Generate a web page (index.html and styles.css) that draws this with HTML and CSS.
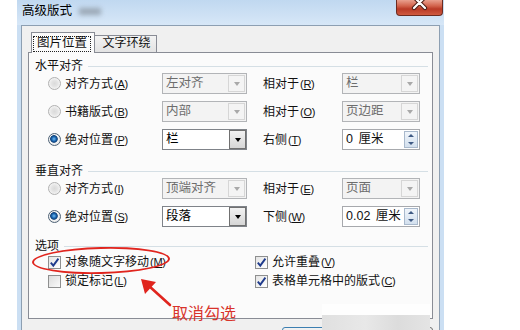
FILE: index.html
```html
<!DOCTYPE html>
<html lang="zh-CN">
<head>
<meta charset="utf-8">
<title>高级版式</title>
<link rel="stylesheet" href="styles.css">
</head>
<body>
<div class="window">
  <div class="titlebar">
    <span class="title">高级版式</span>
    <span class="title-blur"></span>
    <div class="close">
      <svg width="47" height="16" viewBox="0 0 47 16">
        <path d="M18 -2 L29 9 M29 -2 L18 9" stroke="#4a1c14" stroke-width="4.2" stroke-linecap="round" fill="none"/>
        <path d="M18 -2 L29 9 M29 -2 L18 9" stroke="#ffffff" stroke-width="2.2" stroke-linecap="round" fill="none"/>
      </svg>
    </div>
  </div>
  <div class="client">
    <div class="tabs">
      <div class="tab active"><span class="focus">图片位置</span></div>
      <div class="tab">文字环绕</div>
    </div>
    <div class="panel">
      <div class="group-head"><span>水平对齐</span><i class="rule"></i></div>
      <div class="opt-row">
        <label class="radio-label"><span class="radio"></span>对齐方式<span class="key">(<u>A</u>)</span></label>
        <div class="combo disabled"><span class="combo-text">左对齐</span><span class="combo-btn"><i class="tri"></i></span></div>
        <span class="rel-label">相对于<span class="key">(<u>R</u>)</span></span>
        <div class="combo disabled"><span class="combo-text">栏</span><span class="combo-btn"><i class="tri"></i></span></div>
      </div>
      <div class="opt-row">
        <label class="radio-label"><span class="radio"></span>书籍版式<span class="key">(<u>B</u>)</span></label>
        <div class="combo disabled"><span class="combo-text">内部</span><span class="combo-btn"><i class="tri"></i></span></div>
        <span class="rel-label">相对于<span class="key">(<u>O</u>)</span></span>
        <div class="combo disabled"><span class="combo-text">页边距</span><span class="combo-btn"><i class="tri"></i></span></div>
      </div>
      <div class="opt-row">
        <label class="radio-label"><span class="radio checked"></span>绝对位置<span class="key">(<u>P</u>)</span></label>
        <div class="combo"><span class="combo-text">栏</span><span class="combo-btn"><i class="tri"></i></span></div>
        <span class="rel-label">右侧<span class="key">(<u>T</u>)</span></span>
        <div class="spin"><span class="spin-text">0 厘米</span><span class="spin-btns"><i class="up"></i><i class="down"></i></span></div>
      </div>

      <div class="group-head v"><span>垂直对齐</span><i class="rule"></i></div>
      <div class="opt-row">
        <label class="radio-label"><span class="radio"></span>对齐方式<span class="key">(<u>I</u>)</span></label>
        <div class="combo disabled"><span class="combo-text">顶端对齐</span><span class="combo-btn"><i class="tri"></i></span></div>
        <span class="rel-label">相对于<span class="key">(<u>E</u>)</span></span>
        <div class="combo disabled"><span class="combo-text">页面</span><span class="combo-btn"><i class="tri"></i></span></div>
      </div>
      <div class="opt-row">
        <label class="radio-label"><span class="radio checked"></span>绝对位置<span class="key">(<u>S</u>)</span></label>
        <div class="combo"><span class="combo-text">段落</span><span class="combo-btn"><i class="tri"></i></span></div>
        <span class="rel-label">下侧<span class="key">(<u>W</u>)</span></span>
        <div class="spin"><span class="spin-text">0.02 厘米</span><span class="spin-btns"><i class="up"></i><i class="down"></i></span></div>
      </div>

      <div class="group-head o"><span>选项</span><i class="rule"></i></div>
      <div class="check-row">
        <label class="check-item"><span class="check on"><svg width="11" height="11" viewBox="0 0 11 11"><path d="M1.8 5.6 L4.3 8.6 L9.4 1.6" stroke="#1f3b8c" stroke-width="1.9" fill="none"/></svg></span>对象随文字移动<span class="key">(<u>M</u>)</span></label>
        <label class="check-item"><span class="check on"><svg width="11" height="11" viewBox="0 0 11 11"><path d="M1.8 5.6 L4.3 8.6 L9.4 1.6" stroke="#1f3b8c" stroke-width="1.9" fill="none"/></svg></span>允许重叠<span class="key">(<u>V</u>)</span></label>
      </div>
      <div class="check-row second">
        <label class="check-item"><span class="check"></span>锁定标记<span class="key">(<u>L</u>)</span></label>
        <label class="check-item"><span class="check on"><svg width="11" height="11" viewBox="0 0 11 11"><path d="M1.8 5.6 L4.3 8.6 L9.4 1.6" stroke="#1f3b8c" stroke-width="1.9" fill="none"/></svg></span>表格单元格中的版式<span class="key">(<u>C</u>)</span></label>
      </div>
    </div>
    <div class="buttons">
      <div class="btn default"></div>
      <div class="btn"></div>
    </div>
  </div>
</div>

<div class="watermark"><div class="wm-top"></div><div class="wm-bottom"></div></div>
<div class="ellipse"></div>
<svg class="arrow" width="40" height="36" viewBox="0 0 40 36">
  <path d="M35 32 L14 13" stroke="#e0251e" stroke-width="2.6" fill="none" stroke-linecap="round"/>
  <polygon points="6,6 21,9 10,21" fill="#e0251e"/>
</svg>
<div class="note">取消勾选</div>
</body>
</html>
```
FILE: styles.css
```css
html, body {
  margin: 0;
  padding: 0;
  height: 330px;
  overflow: hidden;
  background: #ffffff;
}

body {
  font-family: "Liberation Sans", "Noto Sans CJK SC", sans-serif;
  font-size: 12px;
  color: #111;
  position: relative;
}

u { text-decoration: underline; text-underline-offset: 1px; }

.key {
  font-family: "Liberation Sans", sans-serif;
  font-size: 11px;
  margin-left: 1px;
  letter-spacing: -0.3px;
}

.window {
  margin-left: 17px;
  width: 427px;
  height: 345px;
  background: #cbdff3;
  display: flex;
  flex-direction: column;
}

.titlebar {
  height: 25px;
  flex: none;
  display: flex;
  align-items: flex-start;
  background: linear-gradient(#c0d8f0, #d7e7f7);
}

.title {
  padding: 4px 0 0 5px;
  font-size: 12.5px;
  line-height: 15px;
  color: #000;
}

.title-blur {
  width: 22px;
  height: 7px;
  margin: 8px 0 0 7px;
  background: #8f9aa6;
  filter: blur(2.5px);
  opacity: 0.8;
}

.close {
  margin-left: auto;
  margin-right: 1px;
  width: 47px;
  height: 16px;
  box-sizing: border-box;
  border: 1px solid #6c2b20;
  border-top: none;
  border-radius: 0 0 4px 4px;
  background: linear-gradient(#e9a08e 0%, #d2624b 40%, #b93a26 60%, #cf5a40 100%);
  overflow: hidden;
}

.close svg { display: block; margin: -1px 0 0 -1px; }

.client {
  flex: 1;
  margin: 0 4px;
  border: 1px solid #8d9fb2;
  background: #f0f0f0;
  padding: 6px 6px 0 6px;
}

.tabs {
  height: 20px;
  display: flex;
  align-items: flex-end;
  padding-left: 3px;
}

.tab {
  box-sizing: border-box;
  border: 1px solid #898c95;
  border-bottom: none;
  height: 17px;
  width: 62px;
  border-left: none;
  background: linear-gradient(#f3f3f3, #e3e3e3);
  text-align: center;
  line-height: 15px;
  font-size: 12px;
  padding-left: 2px;
}

.tab.active {
  width: 64px;
  height: 21px;
  margin-bottom: -1px;
  border-left: 1px solid #898c95;
  background: #fbfbfb;
  position: relative;
  z-index: 1;
  text-align: left;
  padding: 3px 0 0 1px;
}

.focus {
  display: inline-block;
  border: 1px dotted #222;
  padding: 0 3px 0 3px;
  height: 14px;
  line-height: 13px;
  font-size: 12.5px;
}

.panel {
  box-sizing: border-box;
  height: 267px;
  border: 1px solid #898c95;
  background: #fbfbfb;
  padding: 6px 4px 0 6px;
}

.group-head {
  display: flex;
  align-items: center;
  gap: 5px;
  height: 14px;
  line-height: 14px;
}

.group-head .rule {
  flex: 1;
  height: 1px;
  background: #d5dfe5;
}

.group-head.v { margin-top: 14px; }
.group-head.o { margin-top: 12px; }

.opt-row {
  display: grid;
  grid-template-columns: 114px 85px 95px 78px;
  height: 21px;
  align-items: center;
  padding-left: 13px;
}

.opt-row + .opt-row { margin-top: 7px; }

.radio-label {
  display: flex;
  align-items: center;
  gap: 4px;
  line-height: 14px;
  white-space: nowrap;
}

.radio-label .key,
.check-item .key { margin-left: -3px; }

.radio {
  width: 13px;
  height: 13px;
  box-sizing: border-box;
  border-radius: 50%;
  border: 1px solid #b1b1b1;
  background: radial-gradient(circle, #dadada 0, #e4e4e4 3px, #f3f3f3 5.5px);
  flex: none;
}

.radio.checked {
  border-color: #4e6276;
  background: radial-gradient(circle at 45% 45%, #79bdf0 0, #1f6db8 2px, #0c3e77 3.4px, #f6f6f6 4.2px, #e6e6e6 6px);
}

.rel-label {
  padding-left: 16px;
  line-height: 14px;
}

.combo {
  display: flex;
  height: 21px;
  box-sizing: border-box;
  border: 1px solid #7f8389;
  background: #ffffff;
  color: #000;
}

.combo.disabled {
  border-color: #b2b4b7;
  background: #f3f3f3;
  color: #6d6d6d;
}

.combo-text {
  flex: 1;
  padding-left: 3px;
  line-height: 19px;
  font-size: 12.5px;
}

.combo-btn {
  width: 17px;
  box-sizing: border-box;
  display: flex;
  align-items: center;
  justify-content: center;
  border: 1px solid #707070;
  margin: 0;
  background: linear-gradient(#f2f2f2, #d6d6d6);
}

.combo.disabled .combo-btn {
  border: 1px solid #d6d6d6;
  margin: 1px;
  background: #f4f4f4;
}

.tri {
  width: 0;
  height: 0;
  border-left: 3.5px solid transparent;
  border-right: 3.5px solid transparent;
  border-top: 4px solid #000;
}

.combo.disabled .tri { border-top-color: #a9a9a9; }

.spin {
  display: flex;
  height: 21px;
  box-sizing: border-box;
  border: 1px solid #a7a9ad;
  background: #ffffff;
}

.spin-text {
  flex: 1;
  padding-left: 3px;
  line-height: 19px;
  font-size: 12.5px;
  word-spacing: 2px;
}

.spin-btns {
  width: 14px;
  margin: 1px;
  display: flex;
  flex-direction: column;
  box-sizing: border-box;
  border: 1px solid #a9b9cc;
  background: linear-gradient(#f0f5fb, #d3e0ee);
}

.spin-btns i {
  flex: 1;
  display: flex;
  align-items: center;
  justify-content: center;
}

.spin-btns .up::after,
.spin-btns .down::after {
  content: "";
  border-left: 3px solid transparent;
  border-right: 3px solid transparent;
}

.spin-btns .up::after { border-bottom: 3px solid #3f5a84; }
.spin-btns .down::after { border-top: 3px solid #3f5a84; }

.check-row {
  display: grid;
  grid-template-columns: 207px auto;
  height: 18px;
  align-items: center;
  padding-left: 13px;
}

.check-row.second { margin-top: 1px; }

.check-item {
  display: flex;
  align-items: center;
  gap: 4px;
  line-height: 14px;
  white-space: nowrap;
}

.check {
  width: 13px;
  height: 13px;
  box-sizing: border-box;
  border: 1px solid #8e8f8f;
  background: linear-gradient(135deg, #dcdcdc, #fafafa);
  flex: none;
  display: flex;
  align-items: center;
  justify-content: center;
}

.check.on { background: linear-gradient(135deg, #e4e4e4, #ffffff); }
.check svg { display: block; }

.buttons {
  display: flex;
  justify-content: flex-end;
  gap: 5px;
  margin-top: 8px;
}

.btn {
  width: 73px;
  height: 23px;
  box-sizing: border-box;
  border: 1px solid #707070;
  border-radius: 3px;
  background: linear-gradient(#f2f2f2, #dcdcdc);
}

.btn.default { border-color: #3c7fb1; }

/* annotation overlays */
.watermark {
  position: absolute;
  left: 322px;
  top: 304px;
  width: 108px;
  height: 26px;
}

.wm-top {
  height: 11px;
  background: rgba(255, 255, 255, 0.7);
}

.wm-bottom {
  height: 15px;
  background: linear-gradient(90deg, #e0e0e0, #e8e8e8 40%, #dcdcdc 70%, #e4e4e4);
}

.ellipse {
  position: absolute;
  left: 32px;
  top: 247px;
  width: 138px;
  height: 27px;
  box-sizing: border-box;
  border: 2.5px solid #e0251e;
  border-radius: 50%;
  transform: rotate(-1.5deg);
}

.arrow {
  position: absolute;
  left: 135px;
  top: 273px;
}

.note {
  position: absolute;
  left: 172px;
  top: 304px;
  font-size: 16px;
  line-height: 20px;
  color: #d8332b;
}
```
